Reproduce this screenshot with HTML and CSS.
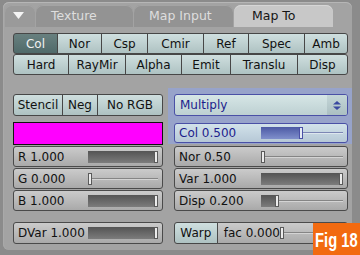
FILE: index.html
```html
<!DOCTYPE html>
<html lang="en">
<head>
  <meta charset="UTF-8" />
  <title>Map To</title>
  <link rel="stylesheet" href="styles.css">
</head>
<body>
  <div class="panel">
    <div class="tabs">
      <div class="tab tab-arrow">
        <svg width="11" height="8" viewBox="0 0 11 8"><polygon points="0,0 11,0 5.5,7" fill="#f4f4f4"/></svg>
      </div>
      <div class="tab tab-tex">Texture</div>
      <div class="tab tab-input">Map Input</div>
      <div class="tab tab-mapto active">Map To</div>
    </div>

    <div class="body">
      <div class="brow">
        <div class="tbtn on" style="width:45px">Col</div>
        <div class="tbtn" style="width:45px">Nor</div>
        <div class="tbtn" style="width:47px">Csp</div>
        <div class="tbtn" style="width:57px">Cmir</div>
        <div class="tbtn" style="width:46px">Ref</div>
        <div class="tbtn" style="width:57px">Spec</div>
        <div class="tbtn" style="width:44px">Amb</div>
      </div>
      <div class="brow">
        <div class="tbtn" style="width:56px">Hard</div>
        <div class="tbtn" style="width:58px">RayMir</div>
        <div class="tbtn" style="width:57px">Alpha</div>
        <div class="tbtn" style="width:50px">Emit</div>
        <div class="tbtn" style="width:68px">Translu</div>
        <div class="tbtn" style="width:51px">Disp</div>
      </div>

      <div class="cols">
        <div class="col-left">
          <div class="brow tall">
            <div class="tbtn" style="width:50px">Stencil</div>
            <div class="tbtn" style="width:36px">Neg</div>
            <div class="tbtn" style="width:66px">No RGB</div>
          </div>
          <div class="swatch"></div>
          <div class="num">
            <span class="lbl">R 1.000</span>
            <span class="track"><span class="fill" style="width:66px"></span><span class="knob"></span><span class="rest"></span></span>
          </div>
          <div class="num">
            <span class="lbl">G 0.000</span>
            <span class="track"><span class="fill" style="width:0"></span><span class="knob"></span><span class="rest"></span></span>
          </div>
          <div class="num">
            <span class="lbl">B 1.000</span>
            <span class="track"><span class="fill" style="width:66px"></span><span class="knob"></span><span class="rest"></span></span>
          </div>
          <div class="num tall gap">
            <span class="lbl">DVar 1.000</span>
            <span class="track"><span class="fill" style="width:66px"></span><span class="knob"></span><span class="rest"></span></span>
          </div>
        </div>

        <div class="col-right">
          <div class="hl">
            <div class="menu">
              <span class="menu-lbl">Multiply</span>
              <span class="menu-arrows">
                <svg width="8" height="9" viewBox="0 0 8 9"><polygon points="0,3.5 4,0 8,3.5" fill="#3a48a0"/><polygon points="0,5.5 4,9 8,5.5" fill="#3a48a0"/></svg>
              </span>
            </div>
            <div class="num sel">
              <span class="lbl">Col 0.500</span>
              <span class="track wide"><span class="fill" style="width:38px"></span><span class="knob"></span><span class="rest"></span></span>
            </div>
          </div>
          <div class="num rrow first">
            <span class="lbl">Nor 0.50</span>
            <span class="track wide"><span class="fill" style="width:0"></span><span class="knob"></span><span class="rest"></span></span>
          </div>
          <div class="num rrow">
            <span class="lbl">Var 1.000</span>
            <span class="track wide"><span class="fill" style="width:78px"></span><span class="knob"></span><span class="rest"></span></span>
          </div>
          <div class="num rrow">
            <span class="lbl">Disp 0.200</span>
            <span class="track wide"><span class="fill" style="width:14px"></span><span class="knob"></span><span class="rest"></span></span>
          </div>
          <div class="brow tall rrow gap">
            <div class="tbtn" style="width:46px">Warp</div>
            <div class="num fac">
              <span class="lbl">fac 0.000</span>
              <span class="track facw"><span class="fill" style="width:0"></span><span class="knob"></span><span class="rest"></span></span>
            </div>
          </div>
        </div>
      </div>
    </div>
  </div>

  <div class="fig"><span class="fig-text">Fig 18</span></div>
</body>
</html>
```

FILE: styles.css
```css
body {
  margin: 0;
  width: 360px;
  height: 255px;
  overflow: hidden;
  position: relative;
  background: #8b8b8b;
  font-family: "DejaVu Sans", sans-serif;
  font-size: 12px;
  color: #111;
}
.panel {
  margin: 2px 0 0 3px;
  width: 349px;
  height: 248px;
  background: #a3a3a3;
  border-radius: 6px;
  box-shadow: inset 0 1px #b6b6b6, inset 1px 0 #a9a9a9;
}

/* tabs */
.tabs {
  display: flex;
  padding: 3px 0 0 2px;
}
.tab {
  height: 22px;
  line-height: 22px;
  box-sizing: border-box;
  border-radius: 7px 7px 0 0;
  background: #939393;
  color: #dedede;
  font-size: 12.5px;
  margin-right: 1px;
  padding-left: 15px;
  box-shadow: inset 0 1px #a4a4a4;
}
.tab-arrow {
  width: 30px;
  padding-left: 8px;
  background: #9a9a9a;
  display: flex;
  align-items: center;
}
.tab-arrow svg { margin-top: -1px; }
.tab-tex { width: 97px; }
.tab-input { width: 99px; }
.tab-mapto { width: 99px; padding-left: 18px; margin-right: 0; }
.tab.active {
  background: #c8c8c8;
  color: #151515;
  box-shadow: inset 0 1px #d6d6d6;
}

.body {
  padding: 6px 0 0 10px;
}

/* toggle buttons */
.brow {
  display: flex;
  height: 21px;
}
.brow.tall { height: 22px; }
.tbtn {
  box-sizing: border-box;
  height: 100%;
  margin-left: -1px;
  border: 1px solid #474747;
  background: linear-gradient(#cfdfdf, #aec2c2);
  display: flex;
  align-items: center;
  justify-content: center;
  white-space: nowrap;
}
.tbtn:first-child {
  margin-left: 0;
  border-radius: 3px 0 0 3px;
}
.tbtn:last-child { border-radius: 0 3px 3px 0; }
.tbtn.on {
  background: linear-gradient(#68807f, #506a6a);
  color: #f2f2f2;
}

.cols {
  display: flex;
  margin-top: 13px;
}
.col-left {
  width: 150px;
  padding-top: 6px;
  margin-right: 5px;
}
.col-right {
  width: 184px;
}

.swatch {
  box-sizing: border-box;
  height: 23px;
  margin-top: 6px;
  background: #ff00ff;
  border: 1px solid #111;
}

/* number sliders */
.num {
  box-sizing: border-box;
  height: 21px;
  margin-top: 1px;
  display: flex;
  align-items: center;
  border: 1px solid #4a4a4a;
  border-radius: 3px;
  background: linear-gradient(#cbcbcb, #a9a9a9);
  padding: 0 4px 0 4px;
}
.num.tall { height: 22px; }
.num.gap, .brow.gap { margin-top: 11px; }
.lbl {
  flex: 1;
  white-space: nowrap;
}
.track {
  display: flex;
  width: 70px;
  height: 12px;
}
.track.wide { width: 82px; }
.track.facw { width: 63px; }
.fill {
  background: linear-gradient(#545454, #7c7c7c);
}
.knob {
  box-sizing: border-box;
  width: 4px;
  border: 1px solid #5a5a5a;
  background: #ececec;
}
.rest {
  flex: 1;
  background: linear-gradient(transparent 5px, #858585 5px, #858585 6px, #d4d4d4 6px, #d4d4d4 7px, transparent 7px);
}

/* highlighted block */
.hl {
  background: #97a3ca;
  padding: 6px 4px 1px 6px;
}
.menu {
  box-sizing: border-box;
  height: 22px;
  display: flex;
  border: 1px solid #4a50a6;
  border-radius: 3px;
  background: linear-gradient(#d6e6e6, #bdd0d2);
  color: #1d1d8c;
}
.menu-lbl {
  flex: 1;
  padding-left: 5px;
  line-height: 20px;
}
.menu-arrows {
  width: 20px;
  display: flex;
  align-items: center;
  justify-content: center;
  background: linear-gradient(#c4d6d8, #abbfc2);
  border-radius: 0 2px 2px 0;
}
.num.sel {
  height: 20px;
  margin-top: 7px;
  border-color: #4a50a6;
  background: linear-gradient(#d2e2ea, #b6c8d6);
  color: #1d1d8c;
}
.num.sel .fill { background: linear-gradient(#4c5aa4, #8090cc); }
.num.sel .knob { border-color: #4a50a6; background: #e4eaf4; }
.num.sel .rest {
  background: linear-gradient(transparent 5px, #7c86b4 5px, #7c86b4 6px, #dde6ee 6px, #dde6ee 7px, transparent 7px);
}

.rrow {
  margin-left: 6px;
  margin-right: 4px;
}
.rrow.first { margin-top: 2px; }

.num.fac {
  flex: 1;
  height: 100%;
  margin: 0 0 0 -1px;
  border-radius: 0 3px 3px 0;
}
.num.fac .lbl { padding-left: 2px; }

.fig {
  position: absolute;
  right: 0;
  bottom: 0;
  width: 47px;
  height: 32px;
  background: #f26a10;
  color: #fff;
  font-family: "Liberation Sans", sans-serif;
  font-weight: bold;
  font-size: 21px;
  line-height: 32px;
  white-space: nowrap;
  display: flex;
  justify-content: center;
  overflow: hidden;
}
.fig-text {
  display: inline-block;
  transform: scaleX(0.7);
  margin-top: 1px;
}
```
